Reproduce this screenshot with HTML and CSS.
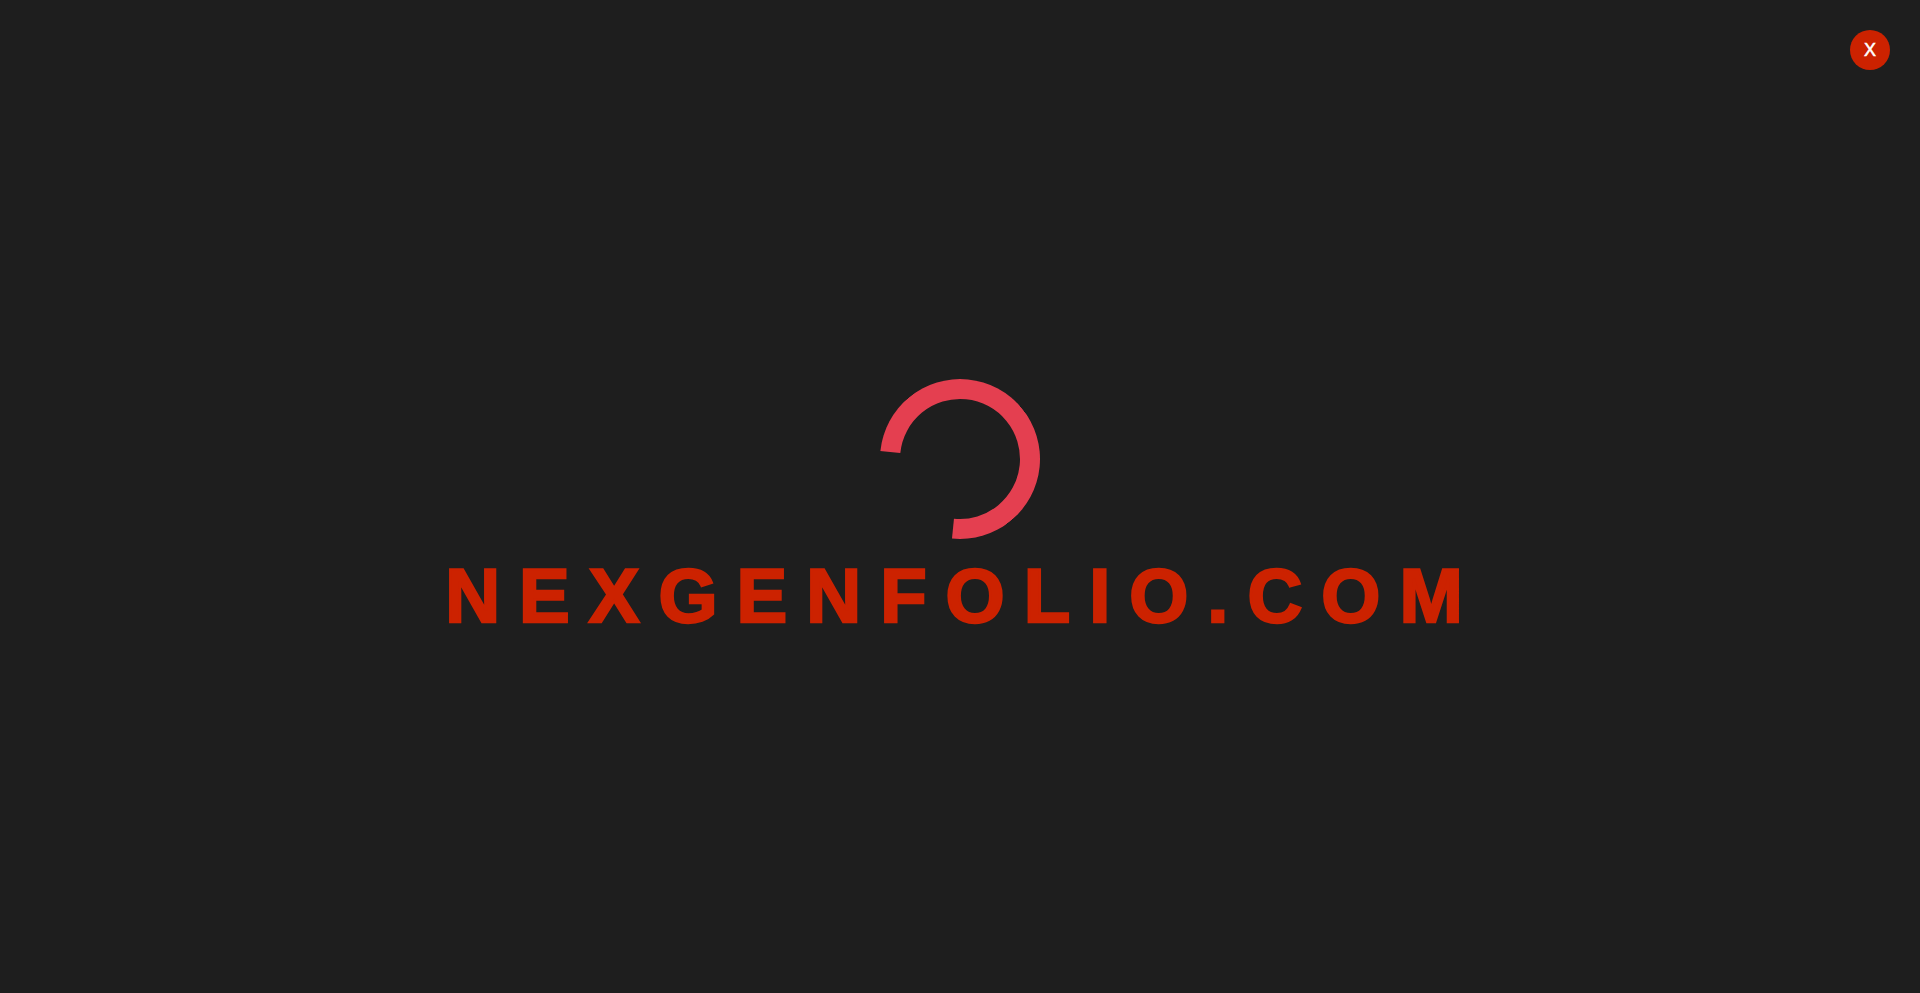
FILE: index.html
```html
<!DOCTYPE html>
<html lang="en">
<head>
<meta charset="utf-8">
<title>NexGenFolio</title>
<link rel="stylesheet" href="styles.css">
</head>
<body>
<button class="close" type="button">X</button>
<main class="loader">
  <div class="spinner"></div>
  <h1 class="brand">NEXGENFOLIO.COM</h1>
</main>
</body>
</html>
```

FILE: styles.css
```css
* { box-sizing: border-box; }
html, body { height: 100%; margin: 0; }
body {
  background: #1e1e1e;
  font-family: "Liberation Sans", Arial, sans-serif;
  overflow: hidden;
}
.loader {
  height: 100%;
  display: flex;
  flex-direction: column;
  align-items: center;
  justify-content: center;
  gap: 38px;
}
.spinner {
  width: 160px;
  height: 160px;
  border: 20px solid #e43f50;
  border-left-color: transparent;
  border-radius: 50%;
  transform: rotate(-39.3deg);
}
.brand {
  margin: 0 0 0 7px;
  font-size: 76px;
  line-height: 37px;
  font-weight: 700;
  letter-spacing: 19px;
  color: #cc2200;
  -webkit-text-stroke: 2.5px #cc2200;
  white-space: nowrap;
}
.close {
  position: absolute;
  top: 30px;
  right: 30px;
  width: 40px;
  height: 40px;
  padding: 0;
  border: 0;
  border-radius: 50%;
  background: #cc2200;
  color: #fff;
  font-family: "Liberation Sans", Arial, sans-serif;
  font-size: 18px;
  -webkit-text-stroke: 0.5px #fff;
}
```
